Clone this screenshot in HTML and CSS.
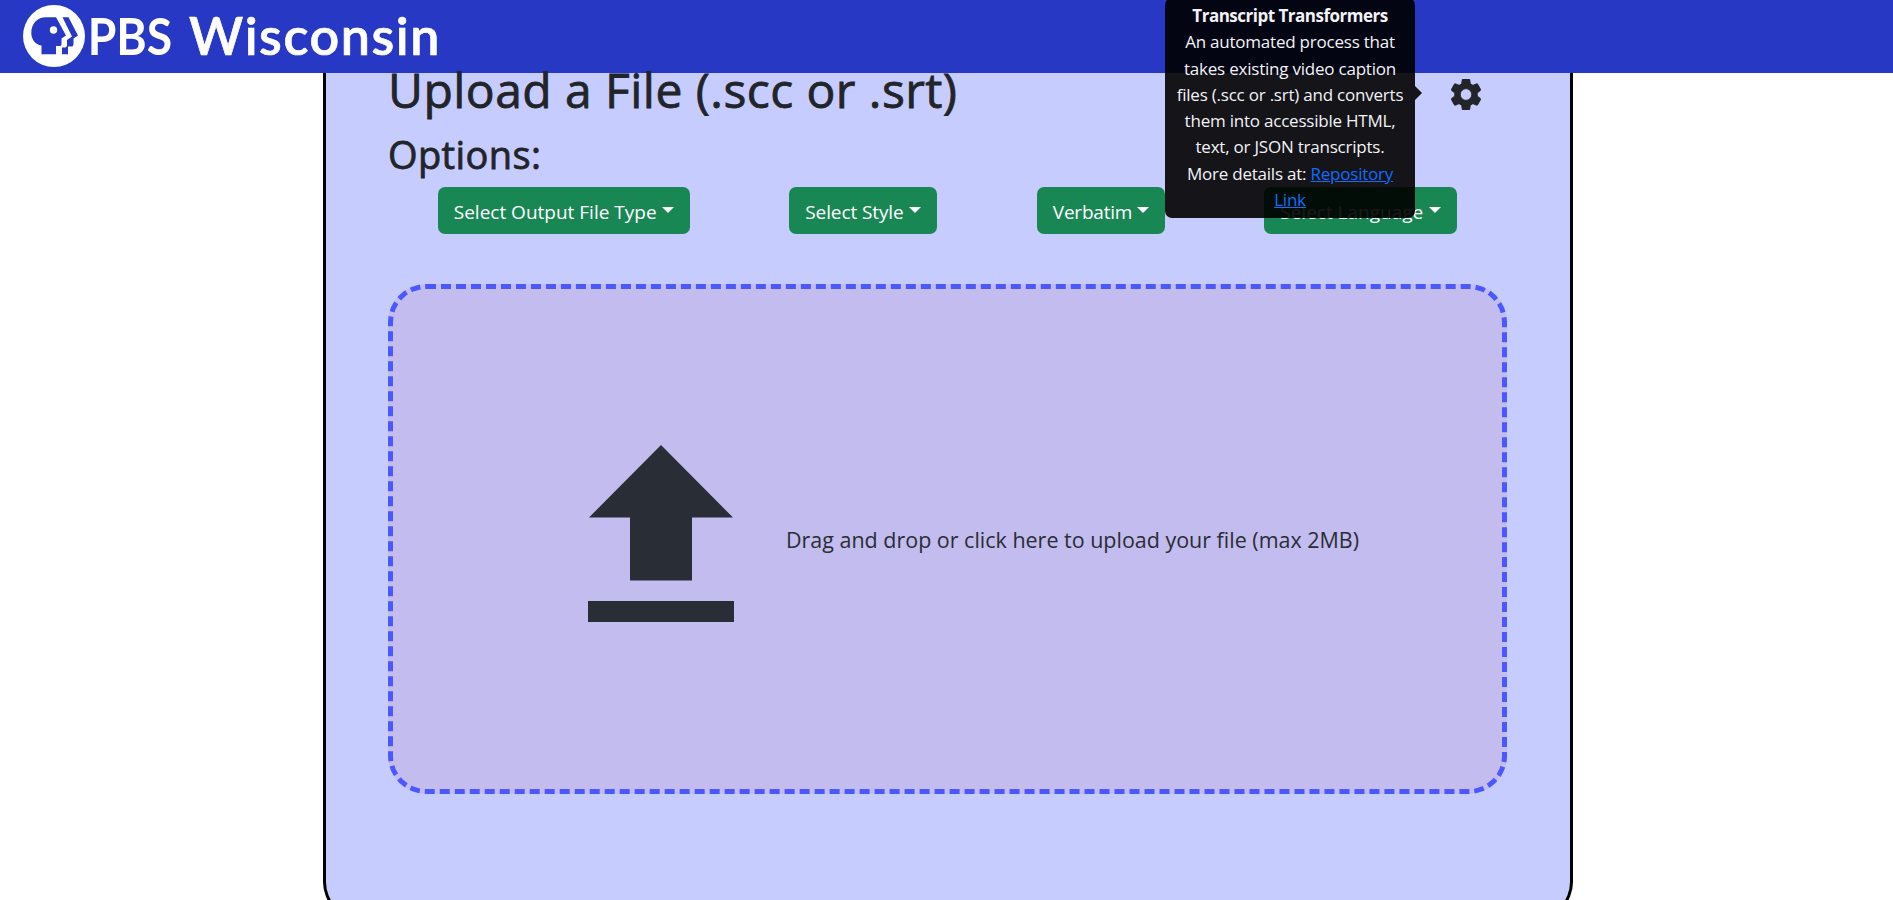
FILE: index.html
```html
<!DOCTYPE html>
<html lang="en">
<head>
<meta charset="utf-8">
<title>Transcript Transformers</title>
<link rel="stylesheet" href="styles.css">
</head>
<body>
<header class="topbar">
  <svg class="brand-mark" viewBox="0 0 62 62" aria-hidden="true">
    <circle cx="31" cy="31" r="31" fill="#fff"/>
    <path d="M18.500 49.300V40.500C12 39.500 8.300 34 8.300 28C8.300 18.500 14.500 12.300 23 12.300H33L43 30.500L38.500 33.500V39.500L37.500 41H33V49.300Z" fill="#2638c4"/>
    <path d="M39.500 12.300H45.500L55 30.500L50.500 33.500V39.500L49.500 41.500H45V49.300H39V42.500H42.500L44 41V35L49 31.500Z" fill="#2638c4"/>
    <circle cx="30.500" cy="25" r="3.700" fill="#fff"/>
  </svg>
  <span class="brand-pbs">PBS</span>
  <span class="brand-state">Wisconsin</span>
</header>
<main class="card">
  <div class="card-head">
    <h1 class="title">Upload a File (.scc or .srt)</h1>
    <div class="settings">
      <svg class="gear" viewBox="2.500 2.400 19 19.200" preserveAspectRatio="none" aria-label="Settings"><path stroke="#212529" stroke-width=".5" stroke-linejoin="round" d="M19.140 12.940c.04-.3.06-.61.06-.94 0-.32-.02-.64-.07-.94l2.030-1.580c.18-.14.23-.41.12-.61l-1.920-3.320c-.12-.22-.37-.29-.59-.22l-2.390.96c-.5-.38-1.030-.7-1.620-.94l-.36-2.540c-.04-.24-.24-.41-.48-.41h-3.840c-.24 0-.43.17-.47.41l-.36 2.540c-.59.24-1.130.57-1.620.94l-2.390-.96c-.22-.08-.47 0-.59.22L2.740 8.870c-.12.21-.08.47.12.61l2.030 1.580c-.05.3-.09.63-.09.94s.02.64.07.94l-2.030 1.580c-.18.14-.23.41-.12.61l1.920 3.320c.12.22.37.29.59.22l2.390-.96c.5.38 1.030.7 1.620.94l.36 2.540c.05.24.24.41.48.41h3.840c.24 0 .44-.17.47-.41l.36-2.540c.59-.24 1.130-.56 1.620-.94l2.390.96c.22.08.47 0 .59-.22l1.920-3.320c.12-.22.07-.47-.12-.61l-2.010-1.580zM12 15.600c-1.980 0-3.600-1.620-3.600-3.600s1.620-3.600 3.600-3.600 3.600 1.620 3.600 3.600-1.620 3.600-3.600 3.600z"/></svg>
      <div class="tip">
        <strong>Transcript Transformers</strong>
        <span>An automated process that</span>
        <span>takes existing video caption</span>
        <span>files (.scc or .srt) and converts</span>
        <span>them into accessible HTML,</span>
        <span>text, or JSON transcripts.</span>
        <span>More details at: <a>Repository</a></span>
        <span><a>Link</a></span>
      </div>
    </div>
  </div>
  <h2 class="subtitle">Options:</h2>
  <div class="options">
    <button class="btn b1"><span>Select Output File Type</span></button>
    <button class="btn b2"><span>Select Style</span></button>
    <button class="btn b3"><span>Verbatim</span></button>
    <button class="btn b4"><span>Select Language</span></button>
  </div>
  <div class="dropzone">
    <svg class="upload" viewBox="0 0 146 177" aria-hidden="true"><path d="M73 0L145 72.500H104V135.500H42V72.500H1ZM0 156H146V177H0Z"/></svg>
    <p class="hint">Drag and drop or click here to upload your file (max 2MB)</p>
  </div>
</main>
</body>
</html>
```
FILE: styles.css
```css
* { box-sizing: border-box; }
html, body { height: 100%; }
body {
  margin: 0;
  overflow: hidden;
  background: #fff;
  color: #212529;
  font-family: "Open Sans", "Noto Sans", sans-serif;
}
.topbar {
  display: flex;
  align-items: center;
  height: 73px;
  padding: 0 0 1px 23px;
  background: #2638c4;
  color: #fff;
  white-space: nowrap;
}
.brand-mark { flex: none; width: 62px; height: 62px; }
.brand-pbs, .brand-state {
  margin-top: -2px;
  font-family: Lato, sans-serif;
  font-size: 52px;
  line-height: 70px;
}
.brand-pbs {
  width: 97px;
  padding-left: 3px;
  font-weight: 700;
  transform: scaleX(.89);
  transform-origin: 0 50%;
}
.brand-state {
  padding-left: 7px;
  font-weight: 600;
  letter-spacing: 1.600px;
  -webkit-text-stroke: .7px #fff;
}
.card {
  width: 1250px;
  height: 847px;
  margin-left: 323px;
  padding: 0 63px 0 62px;
  background: #c7ccff;
  border: 3px solid #000;
  border-top: 0;
  border-radius: 0 0 38px 38px;
}
.card-head { display: flex; justify-content: space-between; height: 50px; }
.title, .subtitle {
  margin: 0;
  font-weight: 500;
  white-space: nowrap;
  -webkit-text-stroke: .8px #212529;
}
.title { height: 50px; margin-top: -13px; font-size: 48px; line-height: 60px; letter-spacing: .45px; }
.subtitle { height: 64px; font-size: 38px; line-height: 62px; letter-spacing: .4px; }
.settings { position: relative; padding: 6px 26px 0 0; }
.gear { display: block; width: 30px; height: 31px; fill: #212529; }
.tip {
  position: absolute;
  z-index: 10;
  top: -75px;
  right: 92px;
  width: 250px;
  height: 220px;
  padding: 5px 0;
  border-radius: 7px;
  background: rgba(0, 0, 0, .9);
  color: #f3f3f7;
  font-size: 17px;
  line-height: 26.25px;
  letter-spacing: -.22px;
  text-align: center;
  white-space: nowrap;
}
.tip strong, .tip > span { display: block; }
.tip strong { letter-spacing: -.5px; }
.tip a { color: #0d6efd; text-decoration: underline; }
.tip::after {
  content: "";
  position: absolute;
  left: 250px;
  top: 88px;
  border: 7px solid transparent;
  border-right: 0;
  border-left-color: rgba(0, 0, 0, .9);
}
.options { display: flex; justify-content: space-around; height: 97px; }
.btn {
  display: flex;
  align-items: center;
  height: 47px;
  padding: 2px 16px 0;
  border: 0;
  border-radius: 7px;
  background: #198754;
  color: #fff;
  font: 400 19px "Open Sans", sans-serif;
  white-space: nowrap;
}
.btn::after {
  content: "";
  margin: -3px 0 0 auto;
  border: 6px solid transparent;
  border-top-color: #fff;
  border-bottom: 0;
}
.b1 { width: 252px; }
.b2 { width: 148px; letter-spacing: -.1px; }
.b3 { width: 128px; letter-spacing: -.2px; }
.b4 { width: 193px; }
.dropzone {
  display: flex;
  align-items: center;
  width: 1119px;
  height: 510px;
  padding: 0 0 12px 195px;
  gap: 52px;
  border: 5px dashed #4b57ff;
  border-radius: 38px;
  background: #c3bcee;
}
.upload { flex: none; width: 146px; height: 177px; fill: #292d36; }
.hint { margin: 13px 0 0; font-size: 21.480px; line-height: 34px; color: #292d36; white-space: nowrap; }
```
